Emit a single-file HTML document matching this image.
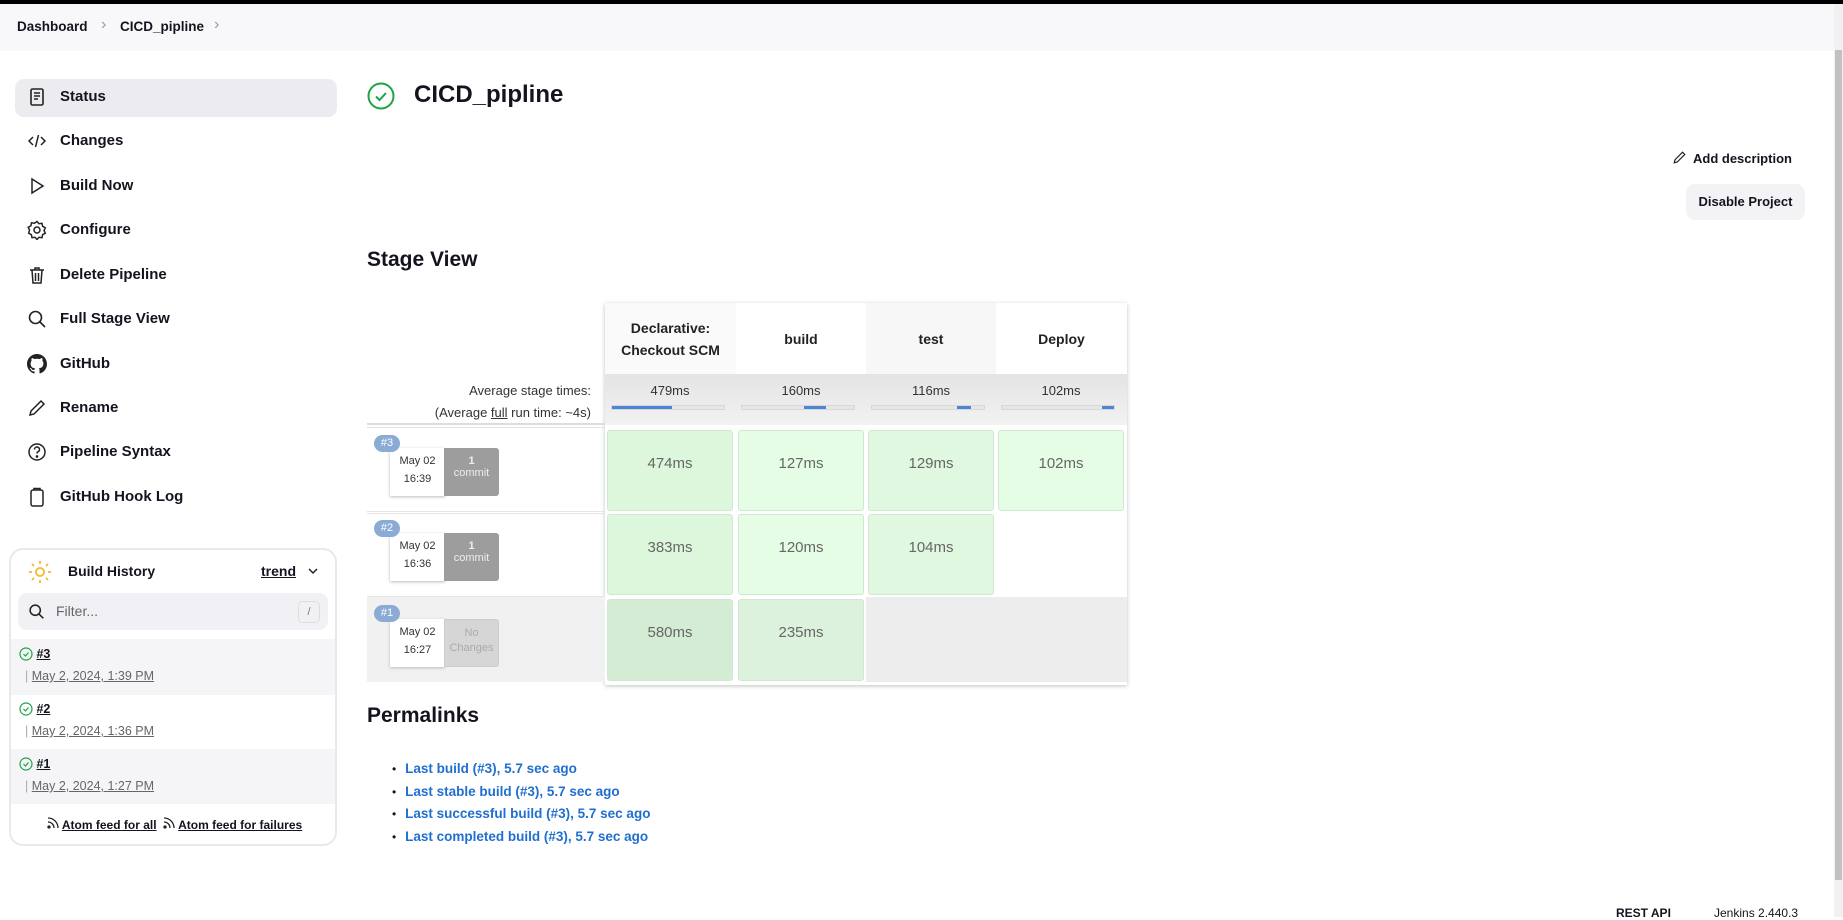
<!DOCTYPE html>
<html><head><meta charset="utf-8"><style>
*{box-sizing:border-box;margin:0;padding:0}
body{width:1843px;height:917px;overflow:hidden;background:#fff;font-family:"Liberation Sans",sans-serif;color:#14141f;position:relative}
.a{position:absolute}
.topbar{left:0;top:0;width:1843px;height:4px;background:#000}
.crumb{left:0;top:4px;width:1834px;height:47px;background:#f8f8fa;font-size:13.5px;font-weight:bold}
.side{left:15px;font-size:15px;font-weight:bold;height:38px;width:322px;line-height:38px;padding-left:45px}
.side svg{position:absolute;left:12px;top:9px}
.scroll{left:1834px;top:4px;width:9px;height:913px;background:#f1f1f1}
.thumb{left:1835px;top:50px;width:7px;height:830px;background:#c1c1c1}
.hd{background:#fff;text-align:center;font-weight:bold;font-size:14px;color:#222;display:flex;align-items:center;justify-content:center;line-height:22px}
.cell{position:absolute;border:1px solid #cfe8cf;border-radius:3px;text-align:center;padding-top:24px;font-size:15px;color:#666}
.bar{position:absolute;height:5px;background:#e6e6e6;border:1px solid #d8d8d8}
.tag{position:absolute;left:374px;width:26px;height:17px;border-radius:9px;background:#8aabd3;color:#fff;font-size:11px;text-align:center;line-height:17px}
.date{position:absolute;width:55px;height:48px;background:#fff;box-shadow:0 1px 3px #bbb;font-size:11px;text-align:center;color:#333}
.cm{position:absolute;width:55px;height:48px;background:#9d9d9d;border-radius:0 3px 3px 0;color:#eee;font-size:11px;text-align:center}
.lk{color:#1f6fd0;font-size:13.5px;font-weight:bold}
</style></head><body>
<div class="a topbar"></div>
<div class="a crumb"><span class="a" style="left:17px;top:15px">Dashboard</span><span class="a" style="left:101px;top:12px;color:#999;font-weight:normal;font-size:16px">›</span><span class="a" style="left:120px;top:15px">CICD_pipline</span><span class="a" style="left:214px;top:12px;color:#999;font-weight:normal;font-size:16px">›</span></div>

<div class="a" style="left:15px;top:79px;width:322px;height:38px;background:#ececf0;border-radius:9px"></div>
<div class="a side" style="top:78px"><svg width="20" height="20" viewBox="0 0 20 20" fill="none" stroke="#222" stroke-width="1.6"><rect x="4" y="2" width="12" height="16" rx="1.5"/><path d="M7 6h6M7 9h6M7 12h4"/></svg>Status</div>
<div class="a side" style="top:122px"><svg width="20" height="20" viewBox="0 0 20 20" fill="none" stroke="#222" stroke-width="1.5"><path d="M6 6l-4 4 4 4M14 6l4 4-4 4M11.5 4l-3 12"/></svg>Changes</div>
<div class="a side" style="top:167px"><svg width="20" height="20" viewBox="0 0 20 20" fill="none" stroke="#222" stroke-width="1.5"><path d="M5 3l11 7-11 7z"/></svg>Build Now</div>
<div class="a side" style="top:211px"><svg width="20" height="20" viewBox="0 0 20 20" fill="none" stroke="#222" stroke-width="1.5"><circle cx="10" cy="10" r="3"/><path d="M10 1.5l2 2.2 3-.4.6 3 2.7 1.5-1.3 2.7 1.3 2.7-2.7 1.5-.6 3-3-.4-2 2.2-2-2.2-3 .4-.6-3-2.7-1.5L2.5 10 1.2 7.3 3.9 5.8l.6-3 3 .4z"/></svg>Configure</div>
<div class="a side" style="top:256px"><svg width="20" height="20" viewBox="0 0 20 20" fill="none" stroke="#222" stroke-width="1.5"><path d="M3 5h14M8 5V3h4v2M5 5l1 13h8l1-13M8.5 8v8M11.5 8v8"/></svg>Delete Pipeline</div>
<div class="a side" style="top:300px"><svg width="20" height="20" viewBox="0 0 20 20" fill="none" stroke="#222" stroke-width="1.6"><circle cx="8.5" cy="8.5" r="6"/><path d="M13 13l5 5"/></svg>Full Stage View</div>
<div class="a side" style="top:345px"><svg width="20" height="20" viewBox="0 0 16 16"><path fill="#222" d="M8 0C3.6 0 0 3.6 0 8c0 3.5 2.3 6.5 5.5 7.6.4.1.5-.2.5-.4v-1.4c-2.2.5-2.700-1-2.700-1-.4-.9-.9-1.200-.9-1.200-.7-.5.1-.5.1-.5.8.1 1.200.8 1.200.8.7 1.300 1.900.9 2.300.7.1-.5.3-.9.5-1.100-1.800-.2-3.600-.9-3.600-4 0-.9.3-1.600.8-2.100-.1-.2-.4-1 .1-2.100 0 0 .7-.2 2.200.8.6-.2 1.300-.3 2-.3s1.400.1 2 .3c1.500-1 2.200-.8 2.200-.8.4 1.100.2 1.900.1 2.100.5.6.8 1.300.8 2.100 0 3.100-1.900 3.700-3.600 3.900.3.3.5.8.5 1.500v2.200c0 .2.1.5.6.4C13.700 14.500 16 11.500 16 8c0-4.400-3.600-8-8-8z"/></svg>GitHub</div>
<div class="a side" style="top:389px"><svg width="20" height="20" viewBox="0 0 20 20" fill="none" stroke="#222" stroke-width="1.5"><path d="M3 17l1-4L14 3l3 3L7 16z"/></svg>Rename</div>
<div class="a side" style="top:433px"><svg width="20" height="20" viewBox="0 0 20 20" fill="none" stroke="#222" stroke-width="1.5"><circle cx="10" cy="10" r="8"/><path d="M7.5 7.5a2.5 2.5 0 1 1 3.5 2.3c-.7.3-1 .9-1 1.7"/><circle cx="10" cy="14.5" r=".6" fill="#222"/></svg>Pipeline Syntax</div>
<div class="a side" style="top:478px"><svg width="20" height="20" viewBox="0 0 20 20" fill="none" stroke="#222" stroke-width="1.5"><rect x="4" y="3" width="12" height="16" rx="2"/><path d="M7 3V1.5h6V3"/></svg>GitHub Hook Log</div>

<div class="a" style="left:9px;top:548px;width:328px;height:298px;border:2px solid #e8e8ee;border-radius:14px;overflow:hidden">
 <svg class="a" style="left:17px;top:10px" width="24" height="24" viewBox="0 0 24 24" fill="none" stroke="#f5b82e" stroke-width="1.8"><circle cx="12" cy="12" r="4"/><path d="M12 1v3M12 20v3M1 12h3M20 12h3M4 4l2 2M18 18l2 2M4 20l2-2M18 6l2-2"/></svg>
 <span class="a" style="left:57px;top:13px;font-size:14px;font-weight:bold">Build History</span>
 <span class="a" style="left:250px;top:13px;font-size:14px;font-weight:bold;text-decoration:underline">trend</span>
 <svg class="a" style="left:296px;top:17px" width="12" height="8" viewBox="0 0 12 8" fill="none" stroke="#222" stroke-width="1.5"><path d="M2 2l4 4 4-4"/></svg>
 <div class="a" style="left:7px;top:43px;width:310px;height:37px;background:#f1f1f5;border-radius:9px">
  <svg class="a" style="left:10px;top:10px" width="17" height="17" viewBox="0 0 20 20" fill="none" stroke="#222" stroke-width="1.8"><circle cx="8.5" cy="8.5" r="6"/><path d="M13 13l5 5"/></svg>
  <span class="a" style="left:38px;top:10px;font-size:14px;color:#666">Filter...</span>
  <div class="a" style="left:280px;top:8px;width:22px;height:22px;border:1px solid #ddd;border-radius:5px;font-size:11px;color:#777;text-align:center;line-height:20px">/</div>
 </div>
 <div class="a" style="left:0;top:89px;width:326px;height:56px;background:#f5f5f7"></div>
 <div class="a" style="left:0;top:199px;width:326px;height:55px;background:#f5f5f7"></div>
 <div class="a" style="left:8px;top:97px;font-size:12.5px"><svg style="vertical-align:-3px" width="14" height="14" viewBox="0 0 14 14" fill="none" stroke="#1ea446" stroke-width="1.2"><circle cx="7" cy="7" r="6"/><path d="M4.5 7l2 2 3-3.5"/></svg> <b style="text-decoration:underline">#3</b><br><span style="color:#aaa;margin-left:6px">|</span> <span style="color:#666;text-decoration:underline;font-size:12.5px;line-height:30px">May 2, 2024, 1:39 PM</span></div>
 <div class="a" style="left:8px;top:152px;font-size:12.5px"><svg style="vertical-align:-3px" width="14" height="14" viewBox="0 0 14 14" fill="none" stroke="#1ea446" stroke-width="1.2"><circle cx="7" cy="7" r="6"/><path d="M4.5 7l2 2 3-3.5"/></svg> <b style="text-decoration:underline">#2</b><br><span style="color:#aaa;margin-left:6px">|</span> <span style="color:#666;text-decoration:underline;font-size:12.5px;line-height:30px">May 2, 2024, 1:36 PM</span></div>
 <div class="a" style="left:8px;top:207px;font-size:12.5px"><svg style="vertical-align:-3px" width="14" height="14" viewBox="0 0 14 14" fill="none" stroke="#1ea446" stroke-width="1.2"><circle cx="7" cy="7" r="6"/><path d="M4.5 7l2 2 3-3.5"/></svg> <b style="text-decoration:underline">#1</b><br><span style="color:#aaa;margin-left:6px">|</span> <span style="color:#666;text-decoration:underline;font-size:12.5px;line-height:30px">May 2, 2024, 1:27 PM</span></div>
 <div class="a" style="left:36px;top:267px;font-size:12px;font-weight:bold;white-space:nowrap"><svg width="12" height="12" viewBox="0 0 12 12" fill="none" stroke="#222" stroke-width="1.3"><circle cx="2" cy="10" r="1" fill="#222"/><path d="M1 5a6 6 0 0 1 6 6M1 1a10 10 0 0 1 10 10"/></svg> <u>Atom feed for all</u> &nbsp;<svg width="12" height="12" viewBox="0 0 12 12" fill="none" stroke="#222" stroke-width="1.3"><circle cx="2" cy="10" r="1" fill="#222"/><path d="M1 5a6 6 0 0 1 6 6M1 1a10 10 0 0 1 10 10"/></svg> <u>Atom feed for failures</u></div>
</div>

<svg class="a" style="left:367px;top:82px" width="28" height="28" viewBox="0 0 28 28" fill="none" stroke="#1ea446" stroke-width="2"><circle cx="14" cy="14" r="12.5"/><path d="M9 14.5l3.5 3.5 6.5-7"/></svg>
<div class="a" style="left:414px;top:81px;font-size:24px;font-weight:bold">CICD_pipline</div>
<div class="a" style="left:1672px;top:150px;font-size:13px;font-weight:bold"><svg style="vertical-align:-2px;margin-right:6px" width="15" height="15" viewBox="0 0 20 20" fill="none" stroke="#222" stroke-width="1.6"><path d="M3 17l1-4L14 3l3 3L7 16z"/></svg>Add description</div>
<div class="a" style="left:1686px;top:184px;width:119px;height:36px;background:#f3f3f6;border-radius:9px;font-size:13px;font-weight:bold;text-align:center;line-height:36px">Disable Project</div>
<div class="a" style="left:367px;top:248px;font-size:21px;font-weight:bold">Stage View</div>

<div class="a" style="left:605px;top:303px;width:522px;height:382px;box-shadow:0 1px 4px rgba(0,0,0,.25)"></div>
<div class="a hd" style="left:605px;top:303px;width:131px;height:71px;background:#fafafa">Declarative:<br>Checkout SCM</div>
<div class="a hd" style="left:736px;top:303px;width:130px;height:71px">build</div>
<div class="a hd" style="left:866px;top:303px;width:130px;height:71px;background:#f7f7f7">test</div>
<div class="a hd" style="left:996px;top:303px;width:131px;height:71px">Deploy</div>
<div class="a" style="left:605px;top:374px;width:522px;height:51px;background:linear-gradient(#e4e4e4,#f2f2f2)"></div>
<div class="a" style="left:367px;top:374px;width:238px;height:51px;text-align:right;font-size:13px;line-height:22px;color:#333;padding-right:14px;padding-top:6px;border-bottom:2px solid #ddd">Average stage times:<br>(Average <u>full</u> run time: ~4s)</div>
<div class="a" style="left:605px;top:383px;width:130px;text-align:center;font-size:13px;color:#333">479ms</div>
<div class="a" style="left:736px;top:383px;width:130px;text-align:center;font-size:13px;color:#333">160ms</div>
<div class="a" style="left:866px;top:383px;width:130px;text-align:center;font-size:13px;color:#333">116ms</div>
<div class="a" style="left:996px;top:383px;width:130px;text-align:center;font-size:13px;color:#333">102ms</div>
<div class="bar" style="left:611px;top:405px;width:114px"><div style="width:60px;height:3px;background:#4a85d6"></div></div>
<div class="bar" style="left:741px;top:405px;width:114px"><div style="margin-left:62px;width:22px;height:3px;background:#4a85d6"></div></div>
<div class="bar" style="left:871px;top:405px;width:114px"><div style="margin-left:85px;width:14px;height:3px;background:#4a85d6"></div></div>
<div class="bar" style="left:1001px;top:405px;width:114px"><div style="margin-left:100px;width:12px;height:3px;background:#4a85d6"></div></div>

<div class="a" style="left:367px;top:427px;width:238px;height:85px;border:1px solid #e5e5e5;border-left:none"></div>
<div class="a" style="left:367px;top:513px;width:238px;height:84px;border:1px solid #e5e5e5;border-left:none"></div>
<div class="a" style="left:367px;top:597px;width:238px;height:85px;background:#f1f1f1"></div>
<div class="a" style="left:866px;top:597px;width:261px;height:85px;background:#ededed"></div>

<div class="date" style="left:390px;top:448px"><div style="line-height:24px;margin-top:1px">May 02</div>16:39</div><div class="cm" style="left:444px;top:448px"><b style="display:block;margin-top:7px">1</b>commit</div><div class="tag" style="top:435px">#3</div>
<div class="date" style="left:390px;top:533px"><div style="line-height:24px;margin-top:1px">May 02</div>16:36</div><div class="cm" style="left:444px;top:533px"><b style="display:block;margin-top:7px">1</b>commit</div><div class="tag" style="top:520px">#2</div>
<div class="date" style="left:390px;top:619px"><div style="line-height:24px;margin-top:1px">May 02</div>16:27</div><div class="cm" style="left:444px;top:619px;background:#d6d6d6;color:#aaa;border:1px solid #ccc"><div style="margin-top:6px;line-height:15px">No<br>Changes</div></div><div class="tag" style="top:605px">#1</div>

<div class="cell" style="left:607px;top:430px;width:126px;height:81px;background:#dcf7dc">474ms</div>
<div class="cell" style="left:738px;top:430px;width:126px;height:81px;background:#e4fde4">127ms</div>
<div class="cell" style="left:868px;top:430px;width:126px;height:81px;background:#e0f7e0">129ms</div>
<div class="cell" style="left:998px;top:430px;width:126px;height:81px;background:#e4fde4">102ms</div>
<div class="cell" style="left:607px;top:514px;width:126px;height:81px;background:#dcf7dc">383ms</div>
<div class="cell" style="left:738px;top:514px;width:126px;height:81px;background:#e4fde4">120ms</div>
<div class="cell" style="left:868px;top:514px;width:126px;height:81px;background:#e0f7e0">104ms</div>
<div class="cell" style="left:607px;top:599px;width:126px;height:82px;background:#d3ecd3">580ms</div>
<div class="cell" style="left:738px;top:599px;width:126px;height:82px;background:#dcf2dc">235ms</div>

<div class="a" style="left:367px;top:704px;font-size:21px;font-weight:bold">Permalinks</div>
<div class="a" style="left:392px;top:758px;line-height:21.5px">
<div><span style="font-size:12px">•</span>&nbsp; <span class="lk">Last build (#3), 5.7 sec ago</span></div>
<div><span style="font-size:12px">•</span>&nbsp; <span class="lk">Last stable build (#3), 5.7 sec ago</span></div>
<div><span style="font-size:12px">•</span>&nbsp; <span class="lk">Last successful build (#3), 5.7 sec ago</span></div>
<div><span style="font-size:12px">•</span>&nbsp; <span class="lk">Last completed build (#3), 5.7 sec ago</span></div>
</div>
<div class="a" style="left:1616px;top:906px;font-size:12px;font-weight:bold">REST API</div>
<div class="a" style="left:1714px;top:906px;font-size:12px">Jenkins 2.440.3</div>
<div class="a scroll"></div><div class="a thumb"></div>
</body></html>
